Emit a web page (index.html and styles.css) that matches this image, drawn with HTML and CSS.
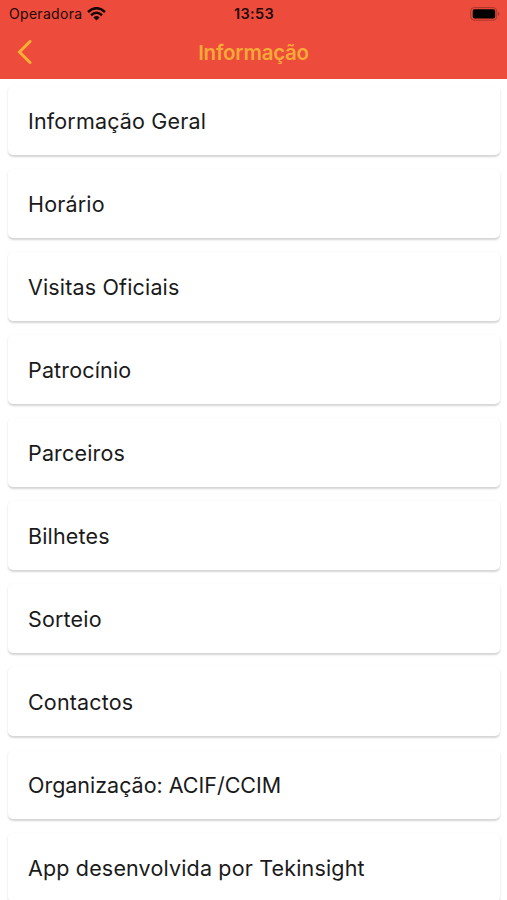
FILE: index.html
```html
<!DOCTYPE html>
<html lang="pt">
<head>
<meta charset="utf-8">
<title>Informação</title>
<link rel="stylesheet" href="styles.css">
</head>
<body>
<header class="header">
  <div class="status">
    <div class="carrier"><span class="carrier-name">Operadora</span>
      <svg class="wifi" width="19" height="14" viewBox="0 0 19 14"><path d="M1 5Q9.5-2.6 18 5M4 8.2Q9.5 3.4 15 8.2" fill="none" stroke="#130605" stroke-width="2.5"/><path d="M6.4 10.4Q9.5 7.8 12.6 10.4L9.5 13.6Z" fill="#130605"/></svg>
    </div>
    <time class="time">13:53</time>
    <svg class="battery" width="30" height="14" viewBox="0 0 30 14"><rect x=".7" y=".6" width="26" height="12.6" rx="3.5" fill="none" stroke="#a8372d"/><rect x="2.7" y="2.3" width="22.5" height="9.2" rx="1.8" fill="#000"/><path d="M28 4.7q3 2.2 0 4.4z" fill="#a8372d"/></svg>
  </div>
  <nav class="nav">
    <svg class="back" width="16" height="24" viewBox="0 0 16 24"><path d="M13 1.5L2.5 12L13 22.5" fill="none" stroke="#fbb034" stroke-width="3" stroke-linecap="round"/></svg>
    <h1 class="title">Informação</h1>
  </nav>
</header>
<main class="list">
  <div class="card"><span class="label">Informação Geral</span></div>
  <div class="card"><span class="label">Horário</span></div>
  <div class="card"><span class="label">Visitas Oficiais</span></div>
  <div class="card"><span class="label">Patrocínio</span></div>
  <div class="card"><span class="label">Parceiros</span></div>
  <div class="card"><span class="label">Bilhetes</span></div>
  <div class="card"><span class="label">Sorteio</span></div>
  <div class="card"><span class="label">Contactos</span></div>
  <div class="card"><span class="label label-caps">Organização: ACIF/CCIM</span></div>
  <div class="card"><span class="label">App desenvolvida por Tekinsight</span></div>
</main>
</body>
</html>
```
FILE: styles.css
```css
* { box-sizing: border-box; }
body { margin: 0; height: 900px; overflow: hidden; background: #fff; color: #1a1a1a; font-family: Inter, "Liberation Sans", sans-serif; }
.header { height: 79px; background: #ed4b3c; }
.status { height: 27px; display: grid; grid-template-columns: 1fr auto 1fr; align-items: center; padding: 0 7px 0 9px; color: #230a08; }
.carrier { display: flex; align-items: center; gap: 5px; font-size: 14px; letter-spacing: .3px; }
.time { margin-right: 1px; font-size: 14.5px; font-weight: 600; letter-spacing: .3px; }
.battery { justify-self: end; }
.nav { height: 52px; display: grid; grid-template-columns: 1fr auto 1fr; align-items: center; padding: 0 17px 2px; }
.title { margin: 0; font-size: 20.5px; font-weight: 600; letter-spacing: -.25px; color: #f8a936; }
.list { display: flex; flex-direction: column; gap: 14px; padding: 7px 7px 0 8px; }
.card { flex: none; height: 69px; display: flex; align-items: center; padding: 1px 20px 0; border-radius: 5px; background: #fff; box-shadow: 0 1.5px 2px rgba(0, 0, 0, .17); }
.label { font-size: 21.5px; line-height: 28px; letter-spacing: .16px; white-space: nowrap; }
.label-caps { letter-spacing: -.02px; }
```
